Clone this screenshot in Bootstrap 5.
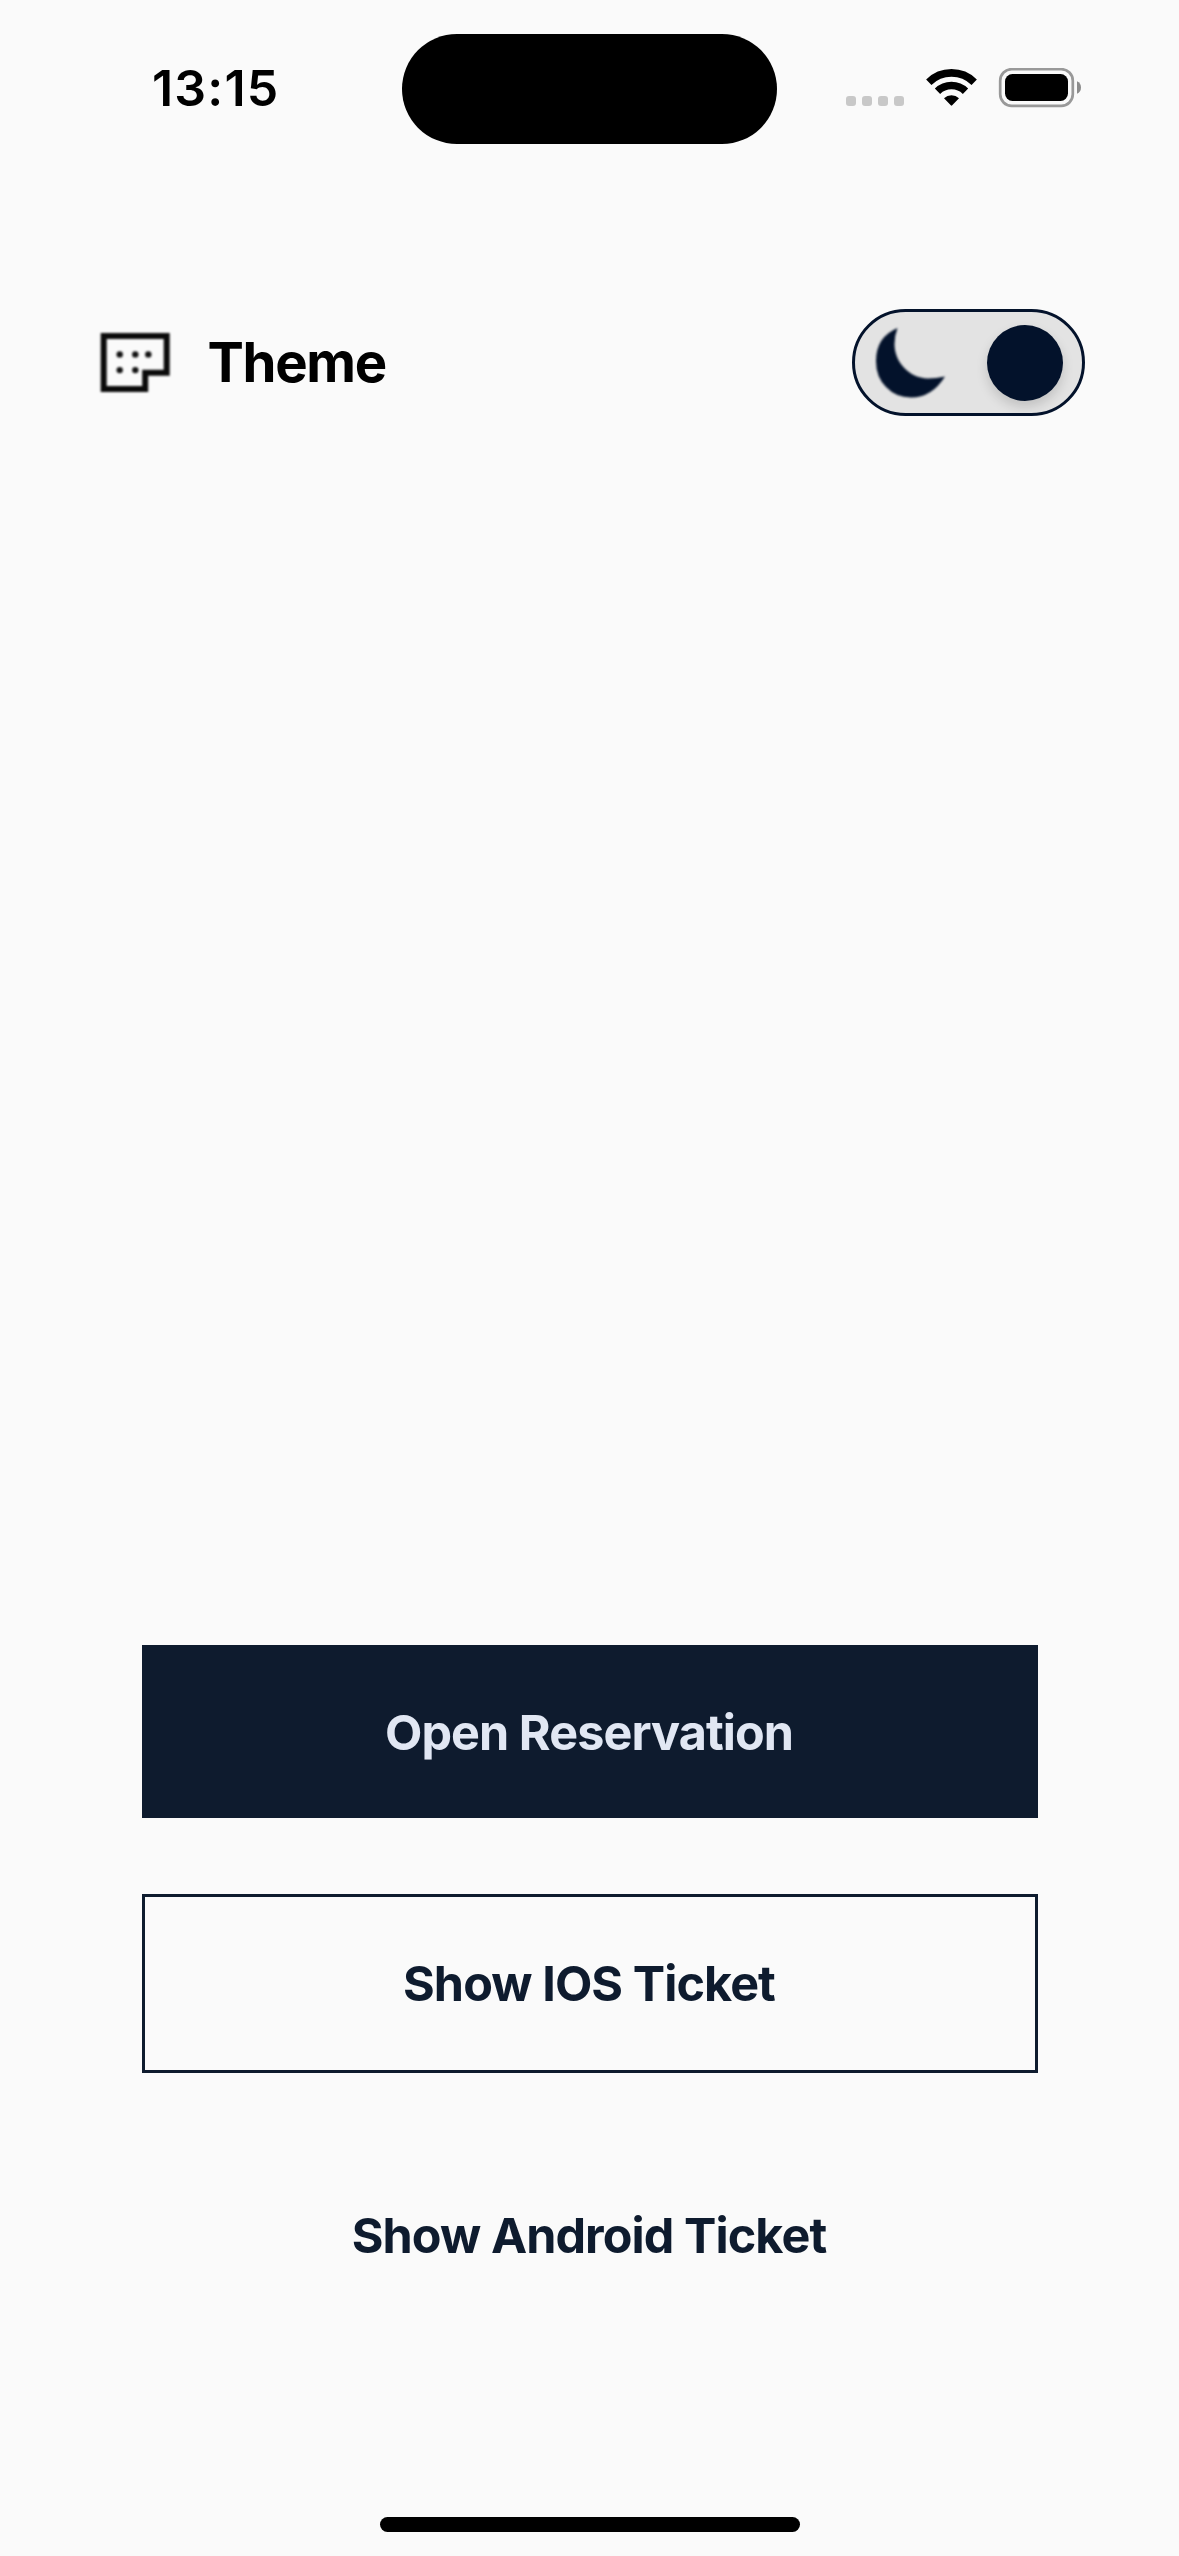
<!DOCTYPE html>
<html lang="en" data-bs-theme="light">
<head>
<meta charset="utf-8">
<meta name="viewport" content="width=device-width, initial-scale=1">
<title>Theme</title>
<link href="https://cdn.jsdelivr.net/npm/bootstrap@5.3.0/dist/css/bootstrap.min.css" rel="stylesheet">
<style>
  body { background: #fafafa; font-family: Inter, "Liberation Sans", sans-serif; color: #000; }
  .screen { height: 2556px; }
  svg { display: block; flex: none; }
  .status-bar { height: 177px; padding: 34px 97px 0 152px; }
  .status-icons { margin-top: 34px; }
  .clock { width: 250px; height: 110px; line-height: 109px; font-size: 50px; font-weight: 600; letter-spacing: 1.2px; }
  .island { width: 375px; height: 110px; background: #000; }
  .theme-row { height: 107px; margin-top: 132px; padding: 0 94px 0 99px; }
  .theme-label { margin-left: 35.5px; font-size: 54.5px; line-height: 107px; font-weight: 700; letter-spacing: -1.3px; }
  .theme-switch { width: 233px; height: 107px; border: 3px solid #03122b; background: #e3e3e3; padding: 0 19px 0 21px; }
  .knob { width: 76px; height: 76px; background: #03122b; box-shadow: 0 6px 12px rgba(0,0,0,.15); }
  .soft { filter: blur(.8px); }
  .actions { padding: 0 141px 0 142px; margin-top: 1229px; }
  .actions .btn { font-size: 48.5px; font-weight: 700; letter-spacing: -.92px; line-height: 1; padding: 0 2px 0 0; border-radius: 0; }
  .actions .btn-reserve { height: 173px; padding-top: 3px; background: #0e1b2e; color: #e1e7f3; border: 0; }
  .actions .btn-ios { height: 179px; padding-top: 1px; margin-top: 76px; border: 3px solid #0e1b2e; color: #0e1b2e; }
  .actions .btn-android { height: 179px; padding-top: 1px; margin-top: 73px; border: 0; color: #0e1b2e; }
  .home-bar { width: 420px; height: 15px; margin-bottom: 24px; background: #000; }
</style>
</head>
<body>
<div class="screen d-flex flex-column overflow-hidden">
  <header class="status-bar d-flex">
    <div class="clock text-nowrap">13:15</div>
    <div class="island rounded-pill flex-shrink-0"></div>
    <svg class="status-icons ms-auto" width="236" height="40" viewBox="846 68 236 40">
      <g fill="#c8c8c8">
        <rect x="846" y="96" width="10" height="10" rx="3"/><rect x="862" y="96" width="10" height="10" rx="3"/>
        <rect x="878" y="96" width="10" height="10" rx="3"/><rect x="894" y="96" width="10" height="10" rx="3"/>
      </g>
      <g fill="none" stroke="#000" stroke-width="7.6">
        <path d="M928.8 82.2a32.4 32.4 0 0 1 45.4 0"/>
        <path d="M937.5 91.2a20 20 0 0 1 28 0"/>
      </g>
      <path d="M944 98.3a11 11 0 0 1 15 0l-6.8 7q-.7.8-1.4 0z"/>
      <rect x="1000.2" y="69.2" width="72.6" height="36.6" rx="11.5" fill="none" stroke="#999" stroke-width="2.7"/>
      <rect x="1005" y="74" width="63" height="27" rx="7.5"/>
      <path d="M1077 81.2q4 1.8 4 6.3t-4 6.3z" fill="#8c8c8c"/>
    </svg>
  </header>

  <section class="theme-row d-flex align-items-center">
    <svg class="soft" width="73" height="63" viewBox="99 331 73 63">
      <path d="M103.7 336h63v36.700h-21.500v16.300h-41.500z" fill="none" stroke="#0a0a0a" stroke-width="6"/>
      <g fill="#111"><circle cx="119.700" cy="354.400" r="3.200"/><circle cx="135.300" cy="354.400" r="3.200"/><circle cx="148.300" cy="354.400" r="3.200"/><circle cx="119.700" cy="370.100" r="3.200"/><circle cx="135.300" cy="370.100" r="3.200"/></g>
    </svg>
    <span class="theme-label">Theme</span>
    <div class="theme-switch rounded-pill d-flex align-items-center justify-content-between ms-auto" role="switch" aria-checked="true">
      <svg class="soft" width="70" height="70" viewBox="876 328 70 70" fill="#03122b">
        <path d="M897.500 328Q876 337 876 361Q876 377 886 387Q896 397.500 911 397.500Q932 397.500 945 376.500Q936 378.500 928 378.500C909 378 894.500 362 894.500 344Q894.500 336 897.500 328z"/>
      </svg>
      <span class="knob rounded-circle"></span>
    </div>
  </section>

  <main class="actions d-flex flex-column">
    <button class="btn btn-reserve w-100" type="button">Open Reservation</button>
    <button class="btn btn-ios w-100" type="button">Show IOS Ticket</button>
    <button class="btn btn-android w-100" type="button">Show Android Ticket</button>
  </main>

  <div class="home-bar rounded-pill mx-auto mt-auto"></div>
</div>
<script src="https://cdn.jsdelivr.net/npm/bootstrap@5.3.0/dist/js/bootstrap.bundle.min.js"></script>
</body>
</html>
